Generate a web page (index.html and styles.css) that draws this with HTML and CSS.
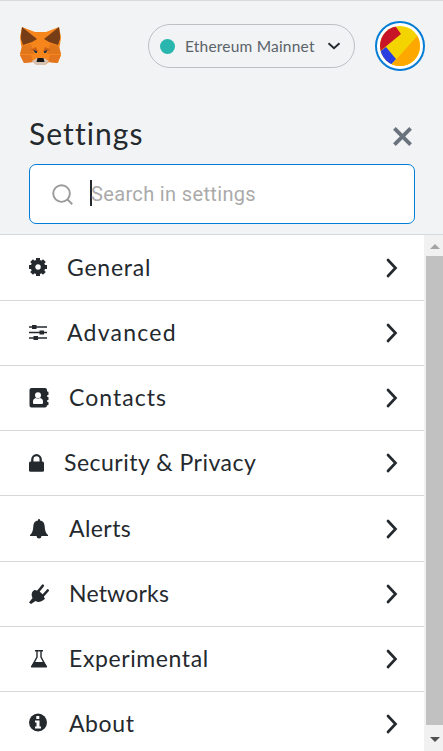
FILE: index.html
```
<!DOCTYPE html>
<html lang="en">
<head>
<meta charset="utf-8">
<title>Settings</title>
<link rel="stylesheet" href="styles.css">
</head>
<body>
<div class="app">
  <header class="top">
    <svg class="fox" viewBox="0 0 41 39">
      <path fill="#f6851b" d="M2 0l13 5h11l13-5 2 10-1 8-1 3 2 7-3 8-9-1-4 3h-8l-4-3-9 1-4-8 2-7-1-3-1-8z"/>
      <path fill="#e2761b" d="M2 19l9-2 3 10H0zM39 19l-9-2-3 10h14z"/>
      <path fill="#e4751f" d="M0 28h11l2 7-9 1zM41 28H30l-2 7 9 1z"/>
      <path fill="#f6851b" d="M15 5h11l-2 13 2 12-2 2h-7l-2-2 2-12z"/>
      <path fill="#763d16" d="M2 0l15 12-5 3-9 3-2-6 0-4zM39 0L24 12l5 3 9 3 2-6 0-4z"/>
      <path fill="#cd6116" d="M10 23l6-3 2 5zM31 23l-6-3-2 5z"/>
      <path fill="#233447" d="M13.500 23l3.500 1v2h-2zM27.500 23l-3.500 1v2h2z"/>
      <path fill="#d7c1b3" d="M12 34l5-3h7l5 3-4 4h-9z"/>
      <path fill="#161616" d="M17.500 31h6l1 4h-8z"/>
    </svg>
    <div class="network">
      <span class="dot"></span>
      <span class="network-name">Ethereum Mainnet</span>
      <svg class="caret" viewBox="0 0 14 8"><path d="M1.500 1.200L7 6.300l5.500-5.100"/></svg>
    </div>
    <svg class="avatar" viewBox="0 0 50 51">
      <defs><clipPath id="disc"><circle cx="25" cy="26" r="20"/></clipPath></defs>
      <circle cx="25" cy="26" r="24" fill="#fff" stroke="#037dd6" stroke-width="2"/>
      <g clip-path="url(#disc)">
        <path fill="#f3d400" d="M0 0h50v51H0z"/>
        <path fill="#fca800" d="M50 7v44H11z"/>
        <path fill="#c81427" d="M0 0h16l10 14-22 18H0z"/>
        <path fill="#2a3de0" d="M3 33l8-6 10 12-8 9z"/>
      </g>
    </svg>
  </header>
  <section class="heading">
    <h1 class="title">Settings</h1>
    <svg class="close" viewBox="0 0 20 20"><path d="M1.500 1.500l17 17M18.500 1.500l-17 17"/></svg>
  </section>
  <div class="search">
    <div class="search-field">
      <svg class="lens" viewBox="0 0 22 22"><circle cx="10" cy="10" r="8.700"/><path d="M16.200 16.200l5 5"/></svg>
      <span class="cursor"></span>
      <span class="placeholder">Search in settings</span>
    </div>
  </div>
  <main class="content">
    <nav class="list">
      <a class="item general">
        <svg class="icon" viewBox="0 0 20 20"><circle cx="9" cy="9" r="5" fill="none" stroke="currentColor" stroke-width="4.500"/><path stroke="currentColor" stroke-width="4" d="M9 0v3.500M9 14.500V18M0 9h3.500M14.500 9H18M2.600 2.600l2.500 2.500M12.900 12.900l2.500 2.500M15.400 2.600l-2.500 2.500M5.100 12.900l-2.500 2.500"/></svg>
        <span class="label">General</span><svg class="chevron" viewBox="0 0 12 20"><path d="M2 2l7.500 8L2 18"/></svg>
      </a>
      <a class="item advanced">
        <svg class="icon" viewBox="0 0 20 20"><path stroke="currentColor" stroke-width="1.500" d="M0 4h18M0 9.500h18M0 15h18"/><path d="M3 2h4.500v4H3zM10.500 7.500H15v4h-4.500zM4.500 13H9v4H4.500z"/></svg>
        <span class="label">Advanced</span><svg class="chevron" viewBox="0 0 12 20"><path d="M2 2l7.500 8L2 18"/></svg>
      </a>
      <a class="item contacts">
        <svg class="icon" viewBox="0 0 20 20"><path d="M2.500 0H16q2 0 2 2v1.500h.8q.7 0 .7.800v2.200q0 .7-.7.700H18v1.500h.8q.7 0 .7.700v2.200q0 .7-.7.700H18v1.500h.8q.7 0 .7.700v2q0 .7-.7.700H18q0 2.300-2 2.300H2.500Q.5 19.500.5 17.500V2q0-2 2-2z"/><circle cx="9" cy="7.300" r="3" fill="#fff"/><path fill="#fff" d="M4 15v-1.500q0-3 3-3.500 2 1 4 0 3 .5 3 3.500V15q0 1-1 1H5q-1 0-1-1z"/></svg>
        <span class="label">Contacts</span><svg class="chevron" viewBox="0 0 12 20"><path d="M2 2l7.500 8L2 18"/></svg>
      </a>
      <a class="item security">
        <svg class="icon" viewBox="0 0 20 20"><rect y="8.500" width="15" height="10.300" rx="1.500"/><path fill="none" stroke="currentColor" stroke-width="2.300" d="M3.300 9.500V6.500a4.200 4.300 0 0 1 8.400 0v3"/></svg>
        <span class="label">Security &amp; Privacy</span><svg class="chevron" viewBox="0 0 12 20"><path d="M2 2l7.500 8L2 18"/></svg>
      </a>
      <a class="item alerts">
        <svg class="icon" viewBox="0 0 20 20"><path d="M9 1.500V.8q0-.8 1-.8t1 .8v.7c3.500.5 4.500 3 4.700 6 .2 4 1 6.500 3.300 8.500v1H1v-1c2.300-2 3.100-4.500 3.300-8.500.2-3 1.200-5.500 4.700-6zM7.500 17h5q-.3 2.500-2.500 2.500T7.500 17z"/></svg>
        <span class="label">Alerts</span><svg class="chevron" viewBox="0 0 12 20"><path d="M2 2l7.500 8L2 18"/></svg>
      </a>
      <a class="item networks">
        <svg class="icon" viewBox="0 0 20 20"><path d="M4 7l2-1.200 10 8.500-.8 1.200q-4.500 4-8.700 1.500l-4.500 3L0 18.500l3.500-4.500Q1.500 10 4 7z"/><path fill="none" stroke="currentColor" stroke-width="2.600" stroke-linecap="round" d="M8.300 8.500l5.500-6.800M13.300 12.500l5.400-6"/><path d="M6 6.500l3.500 0 5.500 5v3z"/></svg>
        <span class="label">Networks</span><svg class="chevron" viewBox="0 0 12 20"><path d="M2 2l7.500 8L2 18"/></svg>
      </a>
      <a class="item experimental">
        <svg class="icon" viewBox="0 0 20 20"><path fill="none" stroke="currentColor" stroke-width="1.400" d="M6 1.700h8M8 2v6L3 17.300h14L12 8V2"/><path d="M5 13h10l3 4.500q0 1-.5 1H2.500q-.7 0-.5-1z"/></svg>
        <span class="label">Experimental</span><svg class="chevron" viewBox="0 0 12 20"><path d="M2 2l7.500 8L2 18"/></svg>
      </a>
      <a class="item about">
        <svg class="icon" viewBox="0 0 20 20"><circle cx="9" cy="8.500" r="9"/><path fill="#fff" d="M7.300 2h3v3h-3zM6 6.500h4.500v6H12v2H6v-2h1.500v-4H6z"/></svg>
        <span class="label">About</span><svg class="chevron" viewBox="0 0 12 20"><path d="M2 2l7.500 8L2 18"/></svg>
      </a>
    </nav>
    <div class="scrollbar">
      <span class="arrow up"></span>
      <span class="thumb"></span>
      <span class="arrow down"></span>
    </div>
  </main>
</div>
</body>
</html>
```
FILE: styles.css
```
* { box-sizing: border-box; }
body { margin: 0; color: #24292e; font-family: Lato, "Open Sans", sans-serif; }
svg { display: block; flex: none; overflow: visible; }
.app { display: flex; flex-direction: column; height: 751px; overflow: hidden; background: #f2f3f4; border-top: 1px solid #d9dadc; }
.top { display: flex; align-items: flex-start; height: 107px; padding: 19px 18px 0 20px; }
.fox { width: 41px; height: 39px; margin-top: 7px; }
.network { display: flex; align-items: center; width: 207px; height: 44px; margin: 4px 20px 0 87px; padding: 0 13px 0 11px; border: 1px solid #bbc0c5; border-radius: 22px; }
.dot { width: 15px; height: 15px; border-radius: 50%; background: #29b6af; }
.network-name { width: 132px; margin-left: 10px; color: #5b636b; font-size: 15.500px; letter-spacing: .2px; white-space: nowrap; }
.caret { width: 14px; height: 8px; margin-left: auto; }
.caret path { fill: none; stroke: #24292e; stroke-width: 1.900; }
.avatar { width: 50px; height: 51px; }
.heading { display: flex; justify-content: space-between; height: 56px; padding: 7px 31px 0 29px; }
.title { margin: 0; font-size: 30px; font-weight: 400; line-height: 36px; letter-spacing: 1.080px; }
.close { width: 19px; height: 19px; margin-top: 12px; }
.close path { fill: none; stroke: #6a737d; stroke-width: 4; }
.search { height: 71px; padding: 0 28px 0 29px; border-bottom: 1px solid #d6d9dc; }
.search-field { display: flex; align-items: center; height: 60px; padding-left: 22px; background: #fff; border: 1px solid #037dd6; border-radius: 7px; }
.lens { width: 21px; height: 21px; }
.lens circle, .lens path { fill: none; stroke: #9b9b9b; stroke-width: 2; }
.cursor { width: 2px; height: 26px; margin: -2px 0 0 17px; background: #24292e; }
.placeholder { margin-left: -1px; color: #aaa; font: 20px/24px Roboto, sans-serif; letter-spacing: .35px; }
.content { display: flex; height: 516px; }
.list { display: grid; flex: none; width: 424px; grid-template-rows: 66px 65px 65px 65px 66px 65px 65px 65px; background: #fff; }
.item { display: flex; align-items: center; padding: 0 26px 0 29px; border-bottom: 1px solid #d6d9dc; }
.icon { width: 20px; height: 20px; fill: currentColor; }
.label { margin: -2px 0 0 20px; font-size: 23px; line-height: 32px; letter-spacing: .6px; white-space: nowrap; }
.general .label, .advanced .label { margin-left: 18px; }
.security .label { margin-left: 15px; letter-spacing: .5px; }
.general .label { letter-spacing: .75px; }
.advanced .label { letter-spacing: 1.250px; }
.contacts .label { letter-spacing: 1.050px; }
.alerts .label { letter-spacing: .42px; }
.networks .label { letter-spacing: .2px; }
.chevron { width: 12px; height: 20px; margin-left: auto; }
.chevron path { fill: none; stroke: #24292e; stroke-width: 2.700; stroke-linecap: round; }
.scrollbar { display: flex; flex-direction: column; align-items: center; width: 19px; padding: 9px 0 9px 2px; background: #f1f1f1; }
.arrow { border: 5px solid transparent; border-top-width: 0; border-bottom: 5px solid #a3a3a3; }
.thumb { width: 17px; height: 469px; margin: 7px 0 12px; background: #c1c1c1; }
.down { border-top: 5px solid #505050; border-bottom-width: 0; }
```
